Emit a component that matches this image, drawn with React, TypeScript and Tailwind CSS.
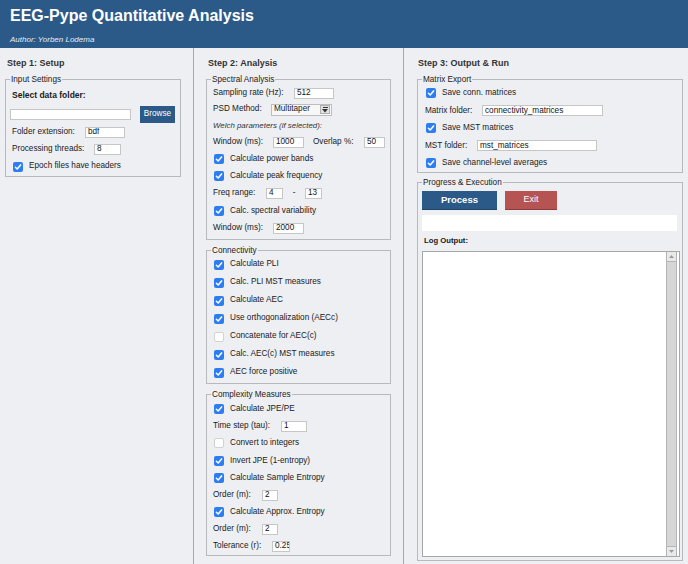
import type { ReactNode } from "react";

// Tk-style EEG analysis window: three columns of settings under a blue title bar.

function Box({ w, value, className = "" }: { w: string; value?: string; className?: string }) {
  return (
    <div
      className={
        "flex h-[11px] shrink-0 items-center overflow-hidden border border-[#c6c6c6] bg-white pl-[2px] leading-none text-[#111] " +
        w +
        " " +
        className
      }
    >
      {value}
    </div>
  );
}

function Tick({ on }: { on: boolean }) {
  if (!on) {
    return <span className="ml-[1px] h-[10px] w-[10px] shrink-0 rounded-[2px] border border-[#d2d2d2] bg-white" />;
  }
  return (
    <span className="ml-[1px] flex h-[10px] w-[10px] shrink-0 items-center justify-center rounded-[2px] bg-[#2c7cf2]">
      <svg width="8" height="8" viewBox="0 0 8 8">
        <path d="M1.4 4.2 L3.2 6 L6.6 1.9" fill="none" stroke="white" strokeWidth="1.5" strokeLinecap="round" strokeLinejoin="round" />
      </svg>
    </span>
  );
}

function Check({ label, on = true, h }: { label: string; on?: boolean; h: string }) {
  return (
    <div className={"flex items-center " + h}>
      <Tick on={on} />
      <span className="ml-[6px]">{label}</span>
    </div>
  );
}

function Row({ h, children }: { h: string; children: ReactNode }) {
  return <div className={"flex items-center " + h}>{children}</div>;
}

// fieldset keeps the legend at a fixed inset; padding goes on the inner div
function Group({
  title,
  className = "",
  inner = "",
  children,
}: {
  title: string;
  className?: string;
  inner?: string;
  children: ReactNode;
}) {
  return (
    <fieldset className={"border border-[#b9b9bd] " + className}>
      <legend className="ml-[4px] px-[1px] text-[8.2px] leading-[11px] text-[#222]">{title}</legend>
      <div className={inner}>{children}</div>
    </fieldset>
  );
}

function Heading({ children }: { children: ReactNode }) {
  return <h2 className="mt-[8px] h-[14px] text-[9px] font-bold leading-[14px] text-[#333]">{children}</h2>;
}

export default function App() {
  return (
    <div className="flex h-[564px] w-[688px] flex-col overflow-hidden bg-[#eeeff3] font-['Liberation_Sans',Arial,sans-serif] text-[8.2px] text-[#1a1a1a]">
      <header className="h-[48px] shrink-0 bg-[#2c5a88] pl-[10px] pt-[5.5px] text-white">
        <h1 className="text-[16px] font-bold leading-[20px]">EEG-Pype Quantitative Analysis</h1>
        <p className="mt-[9.5px] text-[8px] italic leading-[10px] text-[#e6ebf2]">Author: Yorben Lodema</p>
      </header>

      <div className="flex min-h-0 flex-1">
        {/* Step 1 */}
        <section className="w-[194px] shrink-0 border-r border-[#a9a9ad] pl-[5px]">
          <div className="pl-[2px]">
            <Heading>Step 1: Setup</Heading>
          </div>
          <Group title="Input Settings" className="mt-[4px] w-[176px]" inner="pb-[1px] pl-[6px]">
            <Row h="h-[20px]">
              <span className="text-[8.5px] font-bold">Select data folder:</span>
            </Row>
            <Row h="h-[18px]">
              <Box w="w-[121px]" className="-ml-[2px]" />
              <div className="ml-[9px] flex h-[17px] w-[35px] items-center justify-center bg-[#2c5a88] text-[8.2px] text-white">
                Browse
              </div>
            </Row>
            <Row h="h-[18px]">
              <span className="w-[73px] shrink-0">Folder extension:</span>
              <Box w="w-[40px]" value="bdf" />
            </Row>
            <Row h="h-[17px]">
              <span className="w-[82px] shrink-0">Processing threads:</span>
              <Box w="w-[27px]" value="8" />
            </Row>
            <Check h="h-[17px]" label="Epoch files have headers" />
          </Group>
        </section>

        {/* Step 2 */}
        <section className="w-[210px] shrink-0 border-r border-[#a9a9ad] pl-[12px]">
          <div className="pl-[2px]">
            <Heading>Step 2: Analysis</Heading>
          </div>
          <Group title="Spectral Analysis" className="mt-[3.5px] w-[185px]" inner="pb-[2px] pl-[6px]">
            <Row h="h-[17px]">
              <span className="w-[81px] shrink-0">Sampling rate (Hz):</span>
              <Box w="w-[40px]" value="512" />
            </Row>
            <Row h="h-[16px]">
              <span className="w-[58px] shrink-0">PSD Method:</span>
              <div className="flex h-[12px] w-[61px] items-center justify-between border border-[#bdbdbd] bg-[#f7f7f7] pl-[2px] pr-[1px]">
                <span>Multitaper</span>
                <span className="flex h-[9px] w-[10px] flex-col items-center justify-center gap-[1px] border border-[#b0b0b0] bg-[#e2e2e2]">
                  <span className="h-[1px] w-[5px] bg-[#333]" />
                  <svg width="6" height="4" viewBox="0 0 6 4">
                    <path d="M0 0 H6 L3 3.5 Z" fill="#333" />
                  </svg>
                </span>
              </div>
            </Row>
            <Row h="h-[17px]">
              <span className="text-[7.9px] italic text-[#333]">Welch parameters (if selected):</span>
            </Row>
            <Row h="h-[16px]">
              <span className="w-[60px] shrink-0">Window (ms):</span>
              <Box w="w-[31px]" value="1000" />
              <span className="ml-[9px] w-[51px] shrink-0">Overlap %:</span>
              <Box w="w-[21px]" value="50" />
            </Row>
            <Check h="h-[17px]" label="Calculate power bands" />
            <Check h="h-[17px]" label="Calculate peak frequency" />
            <Row h="h-[18px]">
              <span className="w-[53px] shrink-0">Freq range:</span>
              <Box w="w-[17px]" value="4" />
              <span className="w-[22px] shrink-0 text-center">-</span>
              <Box w="w-[17px]" value="13" />
            </Row>
            <Check h="h-[17px]" label="Calc. spectral variability" />
            <Row h="h-[17px]">
              <span className="w-[60px] shrink-0">Window (ms):</span>
              <Box w="w-[31px]" value="2000" />
            </Row>
          </Group>

          <Group title="Connectivity" className="mt-[5px] w-[185px]" inner="pb-[1px] pl-[6px]">
            <Check h="h-[18px]" label="Calculate PLI" />
            <Check h="h-[18px]" label="Calc. PLI MST measures" />
            <Check h="h-[18px]" label="Calculate AEC" />
            <Check h="h-[18px]" label="Use orthogonalization (AECc)" />
            <Check h="h-[18px]" label="Concatenate for AEC(c)" on={false} />
            <Check h="h-[18px]" label="Calc. AEC(c) MST measures" />
            <Check h="h-[18px]" label="AEC force positive" />
          </Group>

          <Group title="Complexity Measures" className="mt-[5px] w-[185px]" inner="pl-[6px] pt-[1px]">
            <Check h="h-[17.2px]" label="Calculate JPE/PE" />
            <Row h="h-[17.2px]">
              <span className="w-[68px] shrink-0">Time step (tau):</span>
              <Box w="w-[26px]" value="1" />
            </Row>
            <Check h="h-[17.2px]" label="Convert to integers" on={false} />
            <Check h="h-[17.2px]" label="Invert JPE (1-entropy)" />
            <Check h="h-[17.2px]" label="Calculate Sample Entropy" />
            <Row h="h-[17.2px]">
              <span className="w-[49px] shrink-0">Order (m):</span>
              <Box w="w-[16px]" value="2" />
            </Row>
            <Check h="h-[17.2px]" label="Calculate Approx. Entropy" />
            <Row h="h-[17.2px]">
              <span className="w-[49px] shrink-0">Order (m):</span>
              <Box w="w-[16px]" value="2" />
            </Row>
            <Row h="h-[17.2px]">
              <span className="w-[59px] shrink-0">Tolerance (r):</span>
              <Box w="w-[18px]" value="0.25" className="pl-[1px]" />
            </Row>
          </Group>
        </section>

        {/* Step 3 */}
        <section className="flex-1 pl-[13px]">
          <div className="pl-[1px]">
            <Heading>Step 3: Output &amp; Run</Heading>
          </div>
          <Group title="Matrix Export" className="mt-[3.5px] w-[266px]" inner="pl-[7px]">
            <Check h="h-[17.5px]" label="Save conn. matrices" />
            <Row h="h-[17.5px]">
              <span className="w-[57px] shrink-0">Matrix folder:</span>
              <Box w="w-[121px]" value="connectivity_matrices" />
            </Row>
            <Check h="h-[17.5px]" label="Save MST matrices" />
            <Row h="h-[17.5px]">
              <span className="w-[52px] shrink-0">MST folder:</span>
              <Box w="w-[120px]" value="mst_matrices" />
            </Row>
            <Check h="h-[17.5px]" label="Save channel-level averages" />
          </Group>

          <Group title="Progress &amp; Execution" className="mt-[4px] w-[266px]" inner="pb-[3px] pl-[4px]">
            <div className="mt-[3px] flex h-[19px] gap-[8px]">
              <div className="flex w-[75px] items-center justify-center border-b border-[#1f4466] bg-[#2c5a88] text-[9.5px] font-bold text-white">
                Process
              </div>
              <div className="flex w-[52px] items-center justify-center border-b border-[#8e3a3a] bg-[#b65353] text-[9px] text-white">
                Exit
              </div>
            </div>
            <div className="mt-[5px] h-[16px] w-[255px] bg-white" />
            <div className="mt-[3px] flex h-[14px] items-center pl-[2px] text-[7.7px] font-bold">Log Output:</div>
            <div className="mt-[3px] flex h-[306px] w-[258px] border border-[#a7a7a7] bg-white">
              <div className="flex-1" />
              <div className="mr-[2px] flex w-[11px] flex-col border-x border-[#b5b5b5] bg-[#d6d6d6]">
                <div className="flex h-[10px] items-center justify-center border-b border-[#b5b5b5] bg-[#e9e9e9]">
                  <svg width="5" height="3" viewBox="0 0 5 3">
                    <path d="M0 3 L2.5 0 L5 3 Z" fill="#9a9a9a" />
                  </svg>
                </div>
                <div className="flex-1" />
                <div className="flex h-[10px] items-center justify-center border-t border-[#b5b5b5] bg-[#e9e9e9]">
                  <svg width="5" height="3" viewBox="0 0 5 3">
                    <path d="M0 0 L2.5 3 L5 0 Z" fill="#9a9a9a" />
                  </svg>
                </div>
              </div>
            </div>
          </Group>
        </section>
      </div>
    </div>
  );
}
